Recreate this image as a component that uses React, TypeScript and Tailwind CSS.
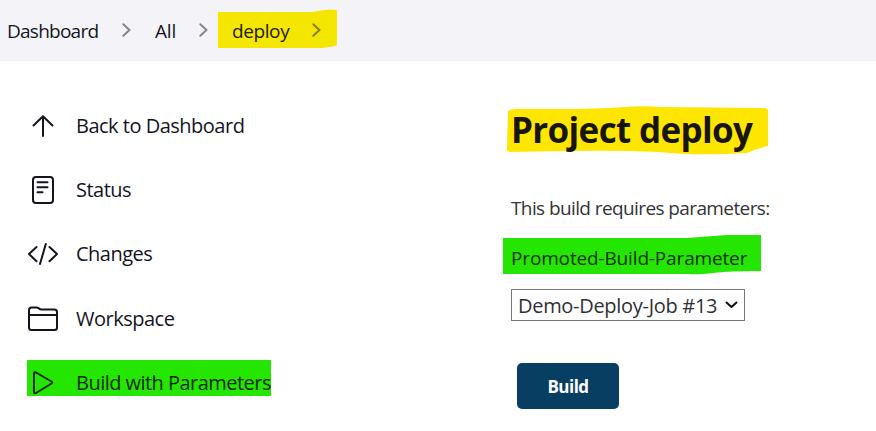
import type { ReactNode } from "react";

const stroke = {
  fill: "none",
  stroke: "currentColor",
  strokeWidth: 2,
  strokeLinecap: "round" as const,
  strokeLinejoin: "round" as const,
};

function Icon({ children }: { children: ReactNode }) {
  return (
    <svg className="h-8 w-8 shrink-0" viewBox="0 0 32 32" {...stroke}>
      {children}
    </svg>
  );
}

function Chevron({ className }: { className: string }) {
  return (
    <svg className={`h-[14px] w-[9px] shrink-0 ${className}`} viewBox="0 0 9 14" {...stroke}>
      <path d="M1.3 1.2 7.5 7 1.3 12.8" />
    </svg>
  );
}

function NavItem({ icon, label, spacing }: { icon: ReactNode; label: string; spacing: string }) {
  return (
    <a className="relative flex h-[64.2px] items-center gap-[17px]">
      <Icon>{icon}</Icon>
      <span className={`text-[20px] leading-7 whitespace-nowrap ${spacing}`}>{label}</span>
    </a>
  );
}

export default function App() {
  return (
    <div className="h-[431px] w-[876px] overflow-hidden bg-white font-['Open_Sans','Noto_Sans',sans-serif] text-[#14141f]">
      <header className="flex h-[61px] items-center border-b border-[#efeff3] bg-[#f4f4f8] pl-[7px] text-[19px]">
        <span className="w-[115px] pt-0.5 tracking-[-0.75px]">Dashboard</span>
        <Chevron className="text-[#85858c]" />
        <span className="ml-6 w-[44px] pt-0.5 tracking-[-0.2px]">All</span>
        <Chevron className="text-[#85858c]" />
        <div className="relative ml-[10px] flex h-[61px] items-center pl-[14px]">
          <svg className="absolute top-[9px] left-0 h-[39px] w-[119px]" viewBox="0 0 119 39">
            <path d="M0 3H94Q103 1 112 .5L119 1V36Q112 38.5 101 39H0Z" fill="#f5e600" />
          </svg>
          <span className="relative w-[80px] pt-0.5 tracking-[-0.4px] text-[#1c1b08]">deploy</span>
          <Chevron className="relative text-[#84801c]" />
        </div>
      </header>
      <div className="flex">
        <nav className="w-[511px] pt-[33px] pl-[27px]">
          <NavItem label="Back to Dashboard" spacing="tracking-[-0.5px]" icon={<path d="M16 26V6.5M6.5 15.5 16 6.2l9.500 9.300" />} />
          <NavItem
            label="Status"
            spacing="tracking-[-0.5px]"
            icon={
              <>
                <rect x="6" y="3" width="20" height="26" rx="3" />
                <path d="M10.500 8.200H20.500M10.500 13.200H20.500M10.500 18.200H15.500" />
              </>
            }
          />
          <NavItem
            label="Changes"
            spacing="tracking-[-0.5px]"
            icon={<path d="M9.500 9 2 16l7.500 7.200M22.500 9 30 16l-7.500 7.200M18.800 6 13 26" />}
          />
          <NavItem
            label="Workspace"
            spacing="tracking-[-0.5px]"
            icon={<path d="M2 12V7Q2 4.500 4.500 4.500H9.500Q11 4.500 12 5.500T14.500 6.500H27.500Q30 6.500 30 9V24.500Q30 27 27.500 27H4.500Q2 27 2 24.500ZM2 12H30" />}
          />
          <div className="relative">
            <svg className="absolute top-[9px] left-0 h-[36px] w-[244px]" viewBox="0 0 244 36">
              <path d="M0 0H244V36H0Z" fill="#25e600" />
            </svg>
            <div className="text-[#072b08]">
              <NavItem
                label="Build with Parameters"
                spacing="tracking-[-0.53px]"
                icon={<path d="M7 6.500Q7 4.500 9 5.500L24.500 14.500Q26 15.500 24.500 16.500L9 26Q7 27 7 25Z" />}
              />
            </div>
          </div>
        </nav>
        <main className="pt-[42px]">
          <div className="relative h-[54px]">
            <svg className="absolute top-[3px] left-[-4px] h-[49px] w-[262px]" viewBox="0 0 262 49">
              <path d="M1 5Q4 3 9 3L52 3Q90 3 117 1Q135-.5 153 1L257 2Q261 2 261 5V40Q249 43 240 47Q190 50 152 46Q110 44 60 45L3 46Q0 46 0 43Z" fill="#ffe600" />
            </svg>
            <h1 className="relative text-[35px] leading-[54px] font-bold tracking-[-0.65px] whitespace-nowrap text-[#171608]">Project deploy</h1>
          </div>
          <p className="mt-[37px] text-[19px] leading-7 tracking-[-0.6px] whitespace-nowrap text-[#333338]">This build requires parameters:</p>
          <div className="relative mt-[22px] h-7">
            <svg className="absolute top-[-9px] left-[-8px] h-[40px] w-[258px]" viewBox="0 0 258 40">
              <path d="M0 3H185Q210 1 225 0L258 0V36Q225 36 210 38T185 39H0Z" fill="#25e600" />
            </svg>
            <span className="relative text-[19px] leading-7 font-medium tracking-[-0.15px] whitespace-nowrap text-[#093009]">Promoted-Build-Parameter</span>
          </div>
          <button className="mt-[17px] flex h-[32px] w-[234px] items-center border border-[#767676] bg-white pl-[6px] text-[#303035]">
            <span className="w-[207px] pt-0.5 text-left text-[20px] leading-7 tracking-[-0.3px] whitespace-nowrap">Demo-Deploy-Job #13</span>
            <svg className="h-[8px] w-[13px] shrink-0 text-[#101010]" viewBox="0 0 13 8" {...stroke}>
              <path d="m1.500 1.500 5 4.500 5-4.500" />
            </svg>
          </button>
          <button className="mt-[42px] ml-[6px] h-[46px] w-[102px] rounded-[5px] bg-[#073f63] pt-0.5 text-[17px] font-bold tracking-[-0.5px] text-white">Build</button>
        </main>
      </div>
    </div>
  );
}
